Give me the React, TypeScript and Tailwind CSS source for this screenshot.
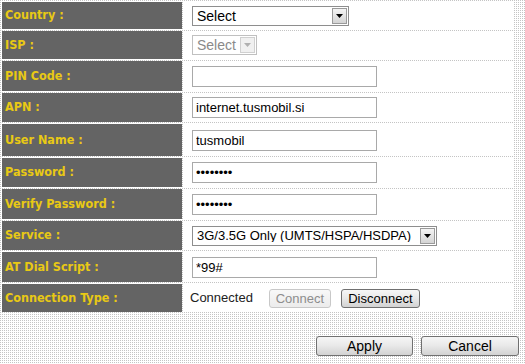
import React from "react";

const dots =
  "bg-[conic-gradient(at_1px_1px,#ffffff_75%,#c4c4c4_0)] bg-[length:2px_2px]";

function FakeSelect({ label, width, disabled, size = "text-[14px]" }: { label: string; width: string; disabled?: boolean; size?: string }) {
  return (
    <div
      className={`flex h-[20px] items-center bg-white border ${
        disabled ? "border-[#c0c0c0] text-[#8a8a8a]" : "border-[#8e8e8e] text-black"
      } ${width}`}
    >
      <span className={`flex-1 overflow-hidden pl-[4px] ${size} leading-none whitespace-nowrap`}>{label}</span>
      <span
        className={`m-[1px] flex h-[16px] w-[15px] shrink-0 items-center justify-center border ${
          disabled ? "border-[#d0d0d0] bg-[#f0f0f0]" : "border-[#9a9a9a] bg-gradient-to-b from-[#f4f4f4] to-[#d4d4d4]"
        }`}
      >
        <svg width="7" height="4" viewBox="0 0 7 4">
          <path d="M0 0h7L3.5 4z" fill={disabled ? "#b0b0b0" : "#000"} />
        </svg>
      </span>
    </div>
  );
}

function TextBox({ value, password }: { value: string; password?: boolean }) {
  return (
    <input
      readOnly
      type={password ? "password" : "text"}
      defaultValue={value}
      className="h-[21px] w-[185px] border border-[#a9a9a9] bg-white px-[3px] text-[13px] text-black outline-none"
    />
  );
}

function Btn({ children, disabled, className }: { children: React.ReactNode; disabled?: boolean; className?: string }) {
  return (
    <button
      className={`rounded-[3px] border bg-gradient-to-b leading-none ${
        disabled
          ? "border-[#c8c8c8] from-[#f8f8f8] to-[#ececec] text-[#8d8d8d]"
          : "border-[#707070] from-[#f6f6f6] via-[#e8e8e8] to-[#d2d2d2] text-black"
      } ${className ?? ""}`}
    >
      {children}
    </button>
  );
}

const rows: { label: string; h: string; field: React.ReactNode }[] = [
  { label: "Country :", h: "h-[27px]", field: <FakeSelect label="Select" width="w-[157px]" /> },
  { label: "ISP :", h: "h-[28px]", field: <FakeSelect label="Select" width="w-[65px]" disabled /> },
  { label: "PIN Code :", h: "h-[30px]", field: <TextBox value="" /> },
  { label: "APN :", h: "h-[29px]", field: <TextBox value="internet.tusmobil.si" /> },
  { label: "User Name :", h: "h-[32px]", field: <TextBox value="tusmobil" /> },
  { label: "Password :", h: "h-[29px]", field: <TextBox value="password" password /> },
  { label: "Verify Password :", h: "h-[30px]", field: <TextBox value="password" password /> },
  {
    label: "Service :",
    h: "h-[29px]",
    field: <FakeSelect label="3G/3.5G Only (UMTS/HSPA/HSDPA)" width="w-[245px]" size="text-[13px]" />,
  },
  { label: "AT Dial Script :", h: "h-[30px]", field: <TextBox value="*99#" /> },
  {
    label: "Connection Type :",
    h: "h-[28px]",
    field: (
      <div className="-ml-[2px] flex items-center">
        <span className="mr-[16px] text-[13px] text-[#222]">Connected</span>
        <Btn disabled className="h-[19px] w-[62px] text-[13px]">Connect</Btn>
        <Btn className="ml-[10px] h-[19px] w-[79px] text-[13px]">Disconnect</Btn>
      </div>
    ),
  },
];

export default function App() {
  return (
    <div className={`h-[364px] w-[525px] overflow-hidden ${dots} font-['Liberation_Sans',Arial,sans-serif] text-[13px]`}>
      <div className="grid w-[516px] grid-cols-[180px_330px] gap-[2px] p-[2px]">
        {rows.map((r) => (
          <React.Fragment key={r.label}>
            <div
              className={`${r.h} flex items-center bg-[#646464] pl-[3px] font-['DejaVu_Sans_Condensed','DejaVu_Sans',sans-serif] text-[12.5px] font-bold text-[#e9c914]`}
            >
              {r.label}
            </div>
            <div className={`${r.h} flex items-center bg-white pl-[8px]`}>{r.field}</div>
          </React.Fragment>
        ))}
      </div>
      <div className="mt-[22px] flex w-[519px] justify-end gap-[8px]">
        <Btn className="h-[20px] w-[97px] text-[14px]">Apply</Btn>
        <Btn className="h-[20px] w-[98px] text-[14px]">Cancel</Btn>
      </div>
    </div>
  );
}
